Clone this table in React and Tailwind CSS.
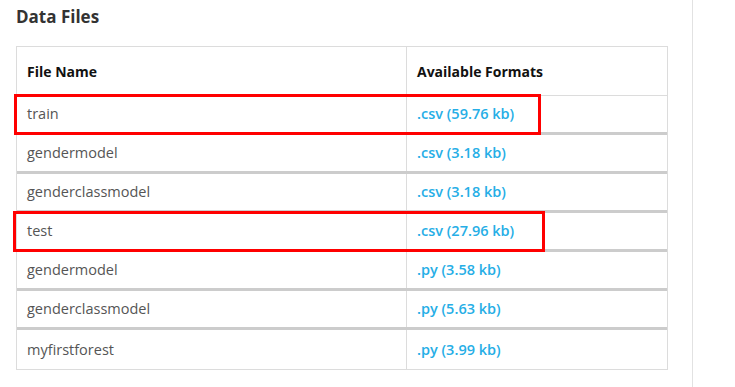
const files = [
  { name: "train", format: ".csv (59.76 kb)" },
  { name: "gendermodel", format: ".csv (3.18 kb)" },
  { name: "genderclassmodel", format: ".csv (3.18 kb)" },
  { name: "test", format: ".csv (27.96 kb)" },
  { name: "gendermodel", format: ".py (3.58 kb)" },
  { name: "genderclassmodel", format: ".py (5.63 kb)" },
  { name: "myfirstforest", format: ".py (3.99 kb)" },
]

export default function App() {
  return (
    <div
      className="relative w-[735px] h-[387px] bg-white overflow-hidden flex"
      style={{ fontFamily: "'Open Sans', 'Liberation Sans', sans-serif" }}
    >
      <div className="w-[693px] h-full border-r border-[#e2e2e2] pl-4 pt-[6px]">
        <h2 className="text-[17px] leading-[22px] font-bold text-[#333]">Data Files</h2>

        <div className="mt-[18px] w-[652px] border border-[#dcdcdc]">
          {/* header */}
          <div className="flex h-[49px] border-b border-[#dcdcdc]">
            <div className="w-[390px] border-r border-[#dcdcdc] flex items-center pl-[10px] text-[14px] font-bold text-[#111]">
              File Name
            </div>
            <div className="flex-1 flex items-center pl-[10px] text-[14px] font-bold text-[#111]">
              Available Formats
            </div>
          </div>

          {files.map((f, i) => (
            <div
              key={i}
              className={`flex h-[39px] ${i < files.length - 1 ? "border-b-[3px] border-[#cccccc]" : ""}`}
            >
              <div className="w-[390px] border-r border-[#dcdcdc] flex items-center pl-[10px] text-[14.5px] text-[#555]">
                {f.name}
              </div>
              <div className="flex-1 flex items-center pl-[10px] text-[14.5px] font-semibold text-[#26aee6]">
                {f.format}
              </div>
            </div>
          ))}
        </div>
      </div>

      {/* highlight boxes */}
      <div className="absolute left-[14px] top-[94px] w-[527px] h-[41px] border-[3px] border-[#ff0000]"></div>
      <div className="absolute left-[13px] top-[211px] w-[532px] h-[41px] border-[3px] border-[#ff0000]"></div>
    </div>
  )
}
